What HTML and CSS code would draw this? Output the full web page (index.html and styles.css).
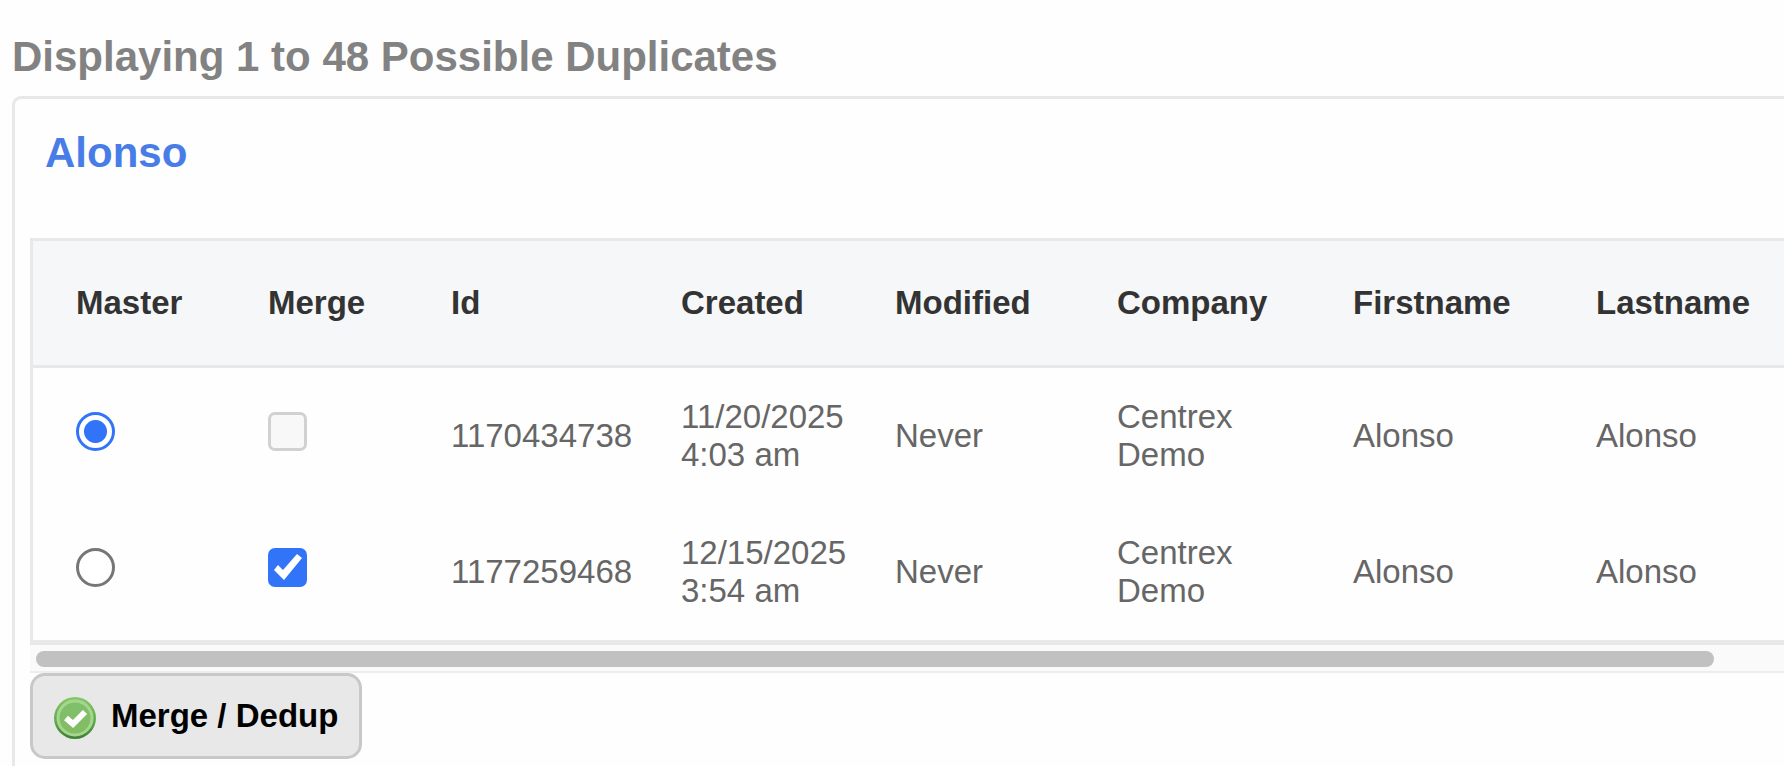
FILE: index.html
```html
<!DOCTYPE html>
<html lang="en">
<head>
    <meta charset="UTF-8">
    <meta name="viewport" content="width=device-width, initial-scale=1.0">
    <title>Possible Duplicates</title>
    <link rel="stylesheet" href="styles.css">
</head>
<body>
    <h1>Displaying 1 to 48 Possible Duplicates</h1>

    <div class="group">
        <h2>Alonso</h2>

        <div class="table-wrap">
            <table>
                <thead>
                    <tr>
                        <th class="col-master">Master</th>
                        <th class="col-merge">Merge</th>
                        <th class="col-id">Id</th>
                        <th class="col-created">Created</th>
                        <th class="col-modified">Modified</th>
                        <th class="col-company">Company</th>
                        <th class="col-first">Firstname</th>
                        <th class="col-last">Lastname</th>
                    </tr>
                </thead>
                <tbody>
                    <tr>
                        <td><input type="radio" name="master" value="1170434738" aria-label="Master 1170434738" checked></td>
                        <td><input type="checkbox" name="merge" value="1170434738" aria-label="Merge 1170434738" disabled></td>
                        <td>1170434738</td>
                        <td>11/20/2025<br>4:03 am</td>
                        <td>Never</td>
                        <td>Centrex<br>Demo</td>
                        <td>Alonso</td>
                        <td>Alonso</td>
                    </tr>
                    <tr>
                        <td><input type="radio" name="master" value="1177259468" aria-label="Master 1177259468"></td>
                        <td><input type="checkbox" name="merge" value="1177259468" aria-label="Merge 1177259468" checked></td>
                        <td>1177259468</td>
                        <td>12/15/2025<br>3:54 am</td>
                        <td>Never</td>
                        <td>Centrex<br>Demo</td>
                        <td>Alonso</td>
                        <td>Alonso</td>
                    </tr>
                </tbody>
            </table>
        </div>
        <div class="scroll-track"><div class="scroll-thumb"></div></div>

        <button type="button" class="merge-btn">
            <svg class="icon" viewBox="0 0 48 48" aria-hidden="true">
                <defs>
                    <linearGradient id="ring" x1="0" y1="0" x2="0" y2="1">
                        <stop offset="0" stop-color="#86c965"/>
                        <stop offset="0.6" stop-color="#5fa84a"/>
                        <stop offset="1" stop-color="#3c7f33"/>
                    </linearGradient>
                    <linearGradient id="face" x1="0" y1="0" x2="0" y2="1">
                        <stop offset="0" stop-color="#7fc06c"/>
                        <stop offset="1" stop-color="#84bb62"/>
                    </linearGradient>
                </defs>
                <circle cx="24" cy="26" r="21" fill="url(#ring)"/>
                <circle cx="24" cy="26" r="17" fill="url(#face)" stroke="#a5d68f" stroke-width="3"/>
                <path d="M15 26l7 6 12-12" fill="none" stroke="#fff" stroke-width="6"/>
            </svg>
            Merge / Dedup
        </button>
    </div>
</body>
</html>
```

FILE: styles.css
```css
* {
    box-sizing: border-box;
}
body {
    display: flex;
    flex-direction: column;
    min-height: 100vh;
    margin: 0;
    padding: 33px 0 0 12px;
    font-family: Arial, "Liberation Sans", sans-serif;
    font-size: 33px;
    line-height: 38px;
    color: #666;
    background-color: #fefefe;
}
h1, h2 {
    margin: 0;
    font-size: 42px;
    line-height: 48px;
}
h1 {
    margin-bottom: 15px;
    color: #828282;
}
h2 {
    margin: 0 0 61px 15px;
    color: #487de7;
}
.group {
    flex: 1;
    padding-top: 30px;
    padding-left: 15px;
    border: 3px solid #e8e8e8;
    border-width: 3px 0 0 3px;
    border-top-left-radius: 9px;
}
.table-wrap {
    overflow: hidden;
    border: 3px solid #e8e8e8;
    border-width: 3px 0 5px 3px;
}
table {
    width: 100%;
    min-width: 1751px;
    table-layout: fixed;
    border-collapse: separate;
    border-spacing: 0;
}
th, td {
    padding: 30px 0 30px 43px;
    text-align: left;
    vertical-align: middle;
    white-space: nowrap;
}
th {
    padding-top: 43px;
    padding-bottom: 43px;
    color: #333;
    background-color: #f6f7f9;
    border-bottom: 3px solid #e8e8e8;
}
.col-master {
    width: 192px;
}
.col-merge {
    width: 183px;
}
.col-id {
    width: 230px;
}
.col-created {
    width: 214px;
}
.col-modified {
    width: 222px;
}
.col-company {
    width: 236px;
}
.col-first {
    width: 243px;
}
input {
    appearance: none;
    display: block;
    width: 39px;
    height: 39px;
    margin: 0 0 9px;
    border: 3px solid #767676;
    border-radius: 7px;
    background-color: #fff;
}
input[type="radio"] {
    border-radius: 50%;
}
input[type="radio"]:checked {
    border-color: #3174f8;
    background: radial-gradient(circle, #3174f8 11px, #fff 12px);
}
input:disabled {
    border-color: #d1d1d1;
    background-color: #f8f8f8;
}
input[type="checkbox"]:checked {
    border-color: #3174f8;
    background-color: #3174f8;
}
input[type="checkbox"]:checked::before {
    content: "";
    display: block;
    width: 33px;
    height: 33px;
    background-color: #fff;
    clip-path: polygon(3px 19px, 7px 14px, 12px 19px, 26px 3px, 31px 7px, 13px 29px);
}
.scroll-track {
    padding: 6px 0 4px 6px;
    border-bottom: 2px solid #ededed;
    background-color: #fafafa;
}
.scroll-thumb {
    width: 96%;
    height: 16px;
    border-radius: 8px;
    background-color: #c1c1c1;
}
.merge-btn {
    display: flex;
    align-items: center;
    gap: 12px;
    height: 86px;
    padding: 0 21px 0 18px;
    border: 3px solid #c8c8c8;
    border-radius: 15px;
    background-color: #e8e8e8;
    font: inherit;
    font-weight: bold;
    color: #000;
    cursor: pointer;
}
.icon {
    width: 48px;
    height: 48px;
}
```
